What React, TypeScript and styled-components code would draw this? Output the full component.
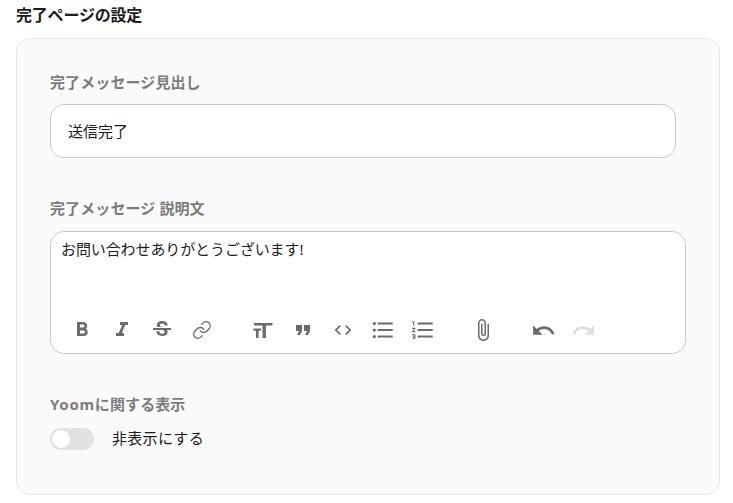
import styled, { createGlobalStyle } from "styled-components";
import {
  MdFormatBold,
  MdFormatItalic,
  MdStrikethroughS,
  MdFormatQuote,
  MdCode,
  MdFormatListBulleted,
  MdFormatListNumbered,
  MdAttachFile,
  MdUndo,
  MdRedo,
} from "react-icons/md";
import { FiLink } from "react-icons/fi";

const GlobalStyle = createGlobalStyle`
  html, body {
    margin: 0;
    background: #fff;
    font-family: "Noto Sans", "Noto Sans CJK JP", sans-serif;
  }
`;

const Page = styled.div`
  width: 733px;
  height: 503px;
  overflow: hidden;
  box-sizing: border-box;
  padding: 5px 13px 0 16px;
`;

const Title = styled.h2`
  margin: 0 0 12px;
  font-size: 16px;
  line-height: 21px;
  font-weight: 700;
  color: #1c1c1c;
  letter-spacing: -0.2px;
`;

const Panel = styled.section`
  box-sizing: border-box;
  height: 457px;
  padding: 33px 33px 0;
  background: #fafafa;
  border: 1px solid #e6e6e6;
  border-radius: 14px;
`;

const Label = styled.div<{ $gap: number }>`
  font-size: 15px;
  line-height: 21px;
  font-weight: 700;
  color: #7c7c7c;
  letter-spacing: 0.1px;
  margin-bottom: ${(p) => p.$gap}px;
`;

const Brand = styled.span`
  letter-spacing: 0.7px;
`;

const TextInput = styled.div`
  box-sizing: border-box;
  width: 626px;
  height: 54px;
  margin-bottom: 40px;
  padding: 0 17px 2px;
  display: flex;
  align-items: center;
  background: #fff;
  border: 1px solid #c8c8c8;
  border-radius: 14px;
  font-size: 15px;
  color: #1c1c1c;
`;

const Editor = styled.div`
  box-sizing: border-box;
  width: 636px;
  height: 123px;
  margin-bottom: 40px;
  padding: 6px 10px 0;
  display: flex;
  flex-direction: column;
  background: #fff;
  border: 1px solid #c8c8c8;
  border-radius: 14px;
`;

const Body = styled.div`
  flex: 1;
  font-size: 15px;
  line-height: 22px;
  color: #1c1c1c;
  letter-spacing: -0.1px;
`;

const Toolbar = styled.div`
  display: flex;
  align-items: center;
  height: 26px;
  margin-bottom: 10px;
  padding-left: 1px;
`;

const Tool = styled.span<{ $off?: boolean; $gap?: number }>`
  width: 40px;
  flex: none;
  display: flex;
  align-items: center;
  justify-content: center;
  margin-right: ${(p) => p.$gap ?? 0}px;
  color: ${(p) => (p.$off ? "#dcdcdc" : "#6b6b6b")};
`;

const SwitchRow = styled.div`
  display: flex;
  align-items: center;
  gap: 18px;
`;

const SwitchText = styled.span`
  font-size: 15px;
  line-height: 20px;
  color: #1c1c1c;
  letter-spacing: 0.3px;
  padding-bottom: 2px;
`;

const Track = styled.span`
  position: relative;
  width: 44px;
  height: 22px;
  border-radius: 11px;
  background: #e2e2e2;
`;

const Thumb = styled.span`
  position: absolute;
  left: 2px;
  top: 2px;
  width: 18px;
  height: 18px;
  border-radius: 50%;
  background: #fff;
`;

const FontSizeIcon = () => (
  <svg width="24" height="24" viewBox="0 0 24 24" fill="currentColor">
    <path d="M3 5h18.5v2.5h-6.6V20h-3.4V7.5H3z" />
    <path d="M2.5 10.5h7.5v2.2H7.6V20H5v-7.3H2.5z" />
  </svg>
);

export default function App() {
  return (
    <Page>
      <GlobalStyle />
      <Title>完了ページの設定</Title>
      <Panel>
        <Label $gap={11}>完了メッセージ見出し</Label>
        <TextInput>送信完了</TextInput>
        <Label $gap={12}>完了メッセージ 説明文</Label>
        <Editor>
          <Body>お問い合わせありがとうございます!</Body>
          <Toolbar>
            <Tool><MdFormatBold size={24} /></Tool>
            <Tool><MdFormatItalic size={24} /></Tool>
            <Tool><MdStrikethroughS size={24} /></Tool>
            <Tool $gap={21}><FiLink size={20} strokeWidth={1.6} /></Tool>
            <Tool><FontSizeIcon /></Tool>
            <Tool><MdFormatQuote size={24} /></Tool>
            <Tool><MdCode size={20} /></Tool>
            <Tool><MdFormatListBulleted size={26} /></Tool>
            <Tool $gap={20}><MdFormatListNumbered size={26} /></Tool>
            <Tool $gap={20}><MdAttachFile size={24} /></Tool>
            <Tool><MdUndo size={25} /></Tool>
            <Tool $off><MdRedo size={25} /></Tool>
          </Toolbar>
        </Editor>
        <Label $gap={13}><Brand>Yoom</Brand>に関する表示</Label>
        <SwitchRow>
          <Track><Thumb /></Track>
          <SwitchText>非表示にする</SwitchText>
        </SwitchRow>
      </Panel>
    </Page>
  );
}
